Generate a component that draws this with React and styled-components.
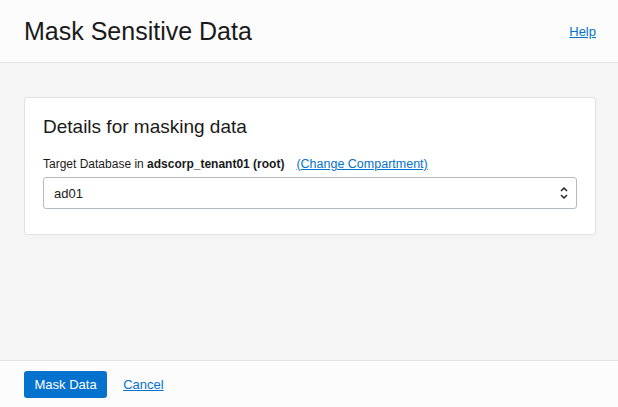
import React from "react";
import styled, { createGlobalStyle } from "styled-components";

const Global = createGlobalStyle`
  html, body, #root { margin: 0; padding: 0; height: 100%; }
  body { font-family: "Liberation Sans", Arial, sans-serif; color: #161513; }
  * { box-sizing: border-box; }
`;

const Page = styled.div`
  display: flex;
  flex-direction: column;
  height: 100vh;
  background: #f5f5f5;
`;

const Header = styled.header`
  display: flex;
  align-items: center;
  justify-content: space-between;
  height: 63px;
  padding: 0 22px 0 24px;
  background: #fcfcfc;
  border-bottom: 1px solid #e4e4e4;
`;

const Title = styled.h1`
  margin: 0;
  font-size: 25px;
  font-weight: 400;
  color: #1a1a1a;
`;

const Link = styled.a`
  color: #0572ce;
  font-size: ${(p) => p.$size || 13}px;
  text-decoration: underline;
  cursor: pointer;
`;

const Body = styled.main`
  flex: 1;
  padding: 34px 22px 0 24px;
`;

const Card = styled.section`
  background: #fff;
  border: 1px solid #e2e2e2;
  border-radius: 3px;
  padding: 17px 18px 25px 18px;
`;

const CardTitle = styled.h2`
  margin: 0;
  font-size: 19px;
  line-height: 24px;
  font-weight: 400;
  color: #1a1a1a;
`;

const Label = styled.div`
  margin-top: 17px;
  font-size: 12px;
  line-height: 16px;
  color: #1a1a1a;
  display: flex;
  align-items: baseline;
  gap: 12px;
`;

const Select = styled.div`
  margin-top: 5px;
  height: 32px;
  border: 1px solid #b5bac1;
  border-radius: 3px;
  display: flex;
  align-items: center;
  justify-content: space-between;
  padding: 0 7px 0 10px;
  font-size: 13px;
  color: #1a1a1a;
`;

const Footer = styled.footer`
  height: 47px;
  background: #fcfcfc;
  border-top: 1px solid #e4e4e4;
  display: flex;
  align-items: center;
  padding: 0 24px;
  gap: 16px;
`;

const Button = styled.button`
  height: 27px;
  padding: 0 10.5px;
  border: none;
  border-radius: 3px;
  background: #0572ce;
  color: #fff;
  font-family: inherit;
  font-size: 13px;
  cursor: pointer;
`;

const Chevrons = () => (
  <svg width="10" height="16" viewBox="0 0 10 16" fill="none" stroke="#222" strokeWidth="1.5">
    <path d="M2 6 L5 3 L8 6" />
    <path d="M2 10 L5 13 L8 10" />
  </svg>
);

export default function App() {
  return (
    <>
      <Global />
      <Page>
        <Header>
          <Title>Mask Sensitive Data</Title>
          <Link>Help</Link>
        </Header>
        <Body>
          <Card>
            <CardTitle>Details for masking data</CardTitle>
            <Label>
              <span>
                Target Database in <b>adscorp_tenant01 (root)</b>
              </span>
              <Link $size={12.5}>(Change Compartment)</Link>
            </Label>
            <Select>
              <span>ad01</span>
              <Chevrons />
            </Select>
          </Card>
        </Body>
        <Footer>
          <Button>Mask Data</Button>
          <Link>Cancel</Link>
        </Footer>
      </Page>
    </>
  );
}
